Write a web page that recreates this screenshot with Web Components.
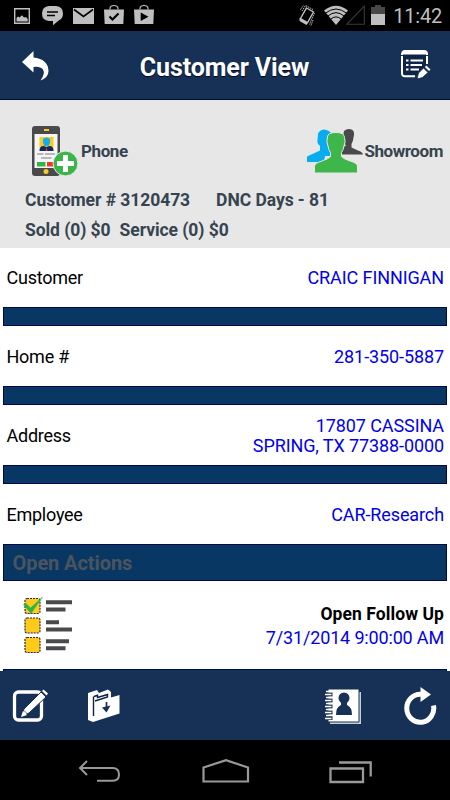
<!DOCTYPE html>
<html lang="en">
<head>
<meta charset="utf-8">
<title>Customer View</title>
<style>
html, body {
    margin: 0;
    height: 100%;
    background: #fff;
}
body {
    font-family: Roboto, "Liberation Sans", sans-serif;
    overflow: hidden;
}
</style>
</head>
<body>
<crm-screen>
    <crm-status slot="status">11:42</crm-status>
    <crm-header slot="header">Customer View</crm-header>
    <crm-summary slot="summary">
        <span slot="phone">Phone</span>
        <span slot="showroom">Showroom</span>
        <span slot="number">Customer # 3120473</span>
        <span slot="dnc">DNC Days - 81</span>
        <span slot="sold">Sold (0) $0</span>
        <span slot="service">Service (0) $0</span>
    </crm-summary>
    <crm-row label="Customer"><span>CRAIC FINNIGAN</span></crm-row>
    <crm-divider></crm-divider>
    <crm-row label="Home #"><span>281-350-5887</span></crm-row>
    <crm-divider></crm-divider>
    <crm-row label="Address"><span>17807 CASSINA</span><span>SPRING, TX 77388-0000</span></crm-row>
    <crm-divider></crm-divider>
    <crm-row label="Employee"><span>CAR-Research</span></crm-row>
    <crm-divider size="large">Open Actions</crm-divider>
    <crm-action due="7/31/2014 9:00:00 AM">Open Follow Up</crm-action>
    <crm-divider></crm-divider>
    <crm-toolbar slot="toolbar"></crm-toolbar>
    <crm-nav slot="nav"></crm-nav>
</crm-screen>

<script>
const icons = {
    picture: [16, 31, `<path d="M.7 8.7H15.3V23.3H.7Z" fill="none" stroke="#bfbfbf" stroke-width="1.4"/><path d="M2.500 21.500V18L4 16.500L5.500 17.500L8 15.300L10 17.500L12 17L13.700 19V21.500Z" fill="#bfbfbf"/>`],
    chat: [21, 31, `<path d="M7 6H14Q21 6.500 21 13.500Q21 18.500 17 20.300L11 25.300V21H7Q0 20.500 0 13.500Q0 6.500 7 6Z" fill="#bfbfbf"/><path d="M5 12H16M5 15.500H13" stroke="#000" stroke-width="1.3"/>`],
    mail: [21, 31, `<path d="M0 8H21V24H0Z" fill="#bfbfbf"/><path d="M1 9.500L10.500 16.500L20 9.500" fill="none" stroke="#000" stroke-width="1.600"/>`],
    bagcheck: [20, 31, `<path d="M0 9.500H20L19.300 24H.7Z" fill="#bfbfbf"/><path d="M6 9.500V8Q6.500 5.500 10 5.500T14 8V9.500" fill="none" stroke="#bfbfbf" stroke-width="1.2"/><path d="M5.500 16.500L8.500 19.500L14.500 13.500" fill="none" stroke="#000" stroke-width="2.200"/>`],
    bagplay: [20, 31, `<path d="M0 9.500H20L19.300 24H.7Z" fill="#bfbfbf"/><path d="M6 9.500V8Q6.500 5.500 10 5.500T14 8V9.500" fill="none" stroke="#bfbfbf" stroke-width="1.2"/><path d="M6.700 12.500L14.500 16.700L6.700 21Z" fill="#000"/>`],
    vibrate: [18, 31, `<path d="M8.500 8L15.500 12L9.500 22.500L2.500 18.500Z" fill="none" stroke="#bfbfbf" stroke-width="1.4"/><path d="M1.500 18L10 22.700L8.500 25L1.500 21Z" fill="#bfbfbf"/><path d="M4 11L7.500 5.500L15 9.500M2.500 9.500L5.500 5.300M16.500 13L12.500 22L11.500 24.500M15 20L13 25.500" fill="none" stroke="#bfbfbf" stroke-dasharray="1.5 .8"/>`],
    wifi: [24, 31, `<path d="M0 10.500Q12 1 24 10.500L12 25Z" fill="#bfbfbf"/><path d="M1 13.500Q12 4.500 23 13.500M3.500 16.300Q12 9 20.500 16.300M6.500 19.300Q12 14.500 17.500 19.300" fill="none" stroke="#000" stroke-width="1"/>`],
    signal: [19, 31, `<path d="M.8 24.300H18.300V6Z" fill="none" stroke="#3a3a3a" stroke-width="1.100"/>`],
    battery: [14, 31, `<path d="M0 7H4V5H10V7H14V14H0Z" fill="#484848"/><path d="M0 14H14V25H0Z" fill="#bfbfbf"/>`],
    back: [28, 32, `<path d="M0 12L11.500 1V7.500Q26 9 26.500 21Q26.500 27.500 18.500 30.500Q23.500 23.500 21 19.500Q18 16 11.500 17V22.500Z" fill="#fff"/>`],
    form: [32, 32, `<path d="M2 7V24Q2 27.300 5 27.300H15M27 7V15" fill="none" stroke="#fff" stroke-width="2"/><path d="M1 6Q1 1 5 1H24Q28 1 28 5V6Z" fill="#fff"/><path d="M3 5.500H26V17L16 26H5Q3 26 3 24Z" fill="#0e2548"/><path d="M6 11.500H8.500M10.500 11.500H23M6 16H8.500M10.500 16H22M6 20.500H8.500M10.500 20.500H19" stroke="#fff" stroke-width="1.800"/><path d="M17 30L18.500 24L23.500 19L28 23.500L22.500 28.500Z" fill="#fff" stroke="#0e2548" stroke-width=".8"/><path d="M24.800 18L26.300 16.500L30.500 20.500L29 22Z" fill="#fff"/>`],
    phone: [46, 52, `<rect x="0" y="1" width="28" height="50" rx="3" fill="#4a4a4c"/><path d="M2.500 9H25.500V43H2.500Z" fill="#f5f5f5"/><path d="M12 4H17V6H12Z" fill="#ffc91d"/><circle cx="14" cy="46.500" r="2.500" fill="#ffc91d"/><path d="M7.500 12H21.500V26H7.500Z" fill="#ffc91d"/><path d="M11 14Q14.500 11 18 14V18L16.500 21H12.500L11 18Z" fill="#15aee8"/><path d="M7.500 26Q7.500 21 11.500 21L14.500 22L17.500 21Q21.500 21 21.500 26Z" fill="#102966"/><path d="M14.500 22L15.500 26H13.500Z" fill="#e83b2e"/><path d="M5 29H11.500M13 29H23M9 33H19.500" stroke="#b8b8b8" stroke-width="2"/><path d="M5 37H13.500V41.500H5Z" fill="#2fb447"/><path d="M15 37H22V41.500H15Z" fill="#e83b2e"/><circle cx="33.500" cy="38.500" r="12.400" fill="#39b54a" stroke="#e7e7e7"/><path d="M31 30H36V36H42V41H36V47H31V41H25V36H31Z" fill="#fff"/>`],
    people: [56, 46, `<path d="M37 3Q41 -.5 45.500 2Q48 4 46.500 9.500Q46 14 44.500 16V19.500L51 22.500Q55.500 24 56 26.500H34V20L39 17.500Q36 14 36 9Z" fill="#49484b"/><path d="M11 6Q12 2 17 1.500Q22 2 24 5V28H18L17 34H0V28.500L13 22.500V18Q9.500 15 10.500 12Z" fill="#08adef"/><path d="M20.500 9Q20.500 4.500 29 4.500Q37.500 4.500 37.500 9.500Q39 14 37 18Q36.500 22 34.500 24.500V28.500Q36 30.500 43 33Q50 35 50.500 38V45H7.500V38Q8 35 15 33Q22 30.500 23.500 28.500V24.500Q21.500 22 21 18Q19 14 20.500 9Z" fill="#3eb649" stroke="#e7e7e7"/>`],
    checklist: [52, 58, `<g fill="#ffcb18" stroke="#26294d" stroke-width="1.200" stroke-dasharray="2 1"><rect x="3" y="2.500" width="15" height="15" rx="2"/><rect x="3" y="22" width="15" height="15" rx="2"/><rect x="3" y="41.500" width="15" height="15" rx="2"/></g><path d="M1.500 8.500L4 7.500L8.500 12L20.500 1L9 17.500Z" fill="#2bb34a" stroke="#2bb34a" stroke-width=".5"/><path d="M24 6.200H50M24 13.500H43.500M24 26.200H37M24 33.500H50M24 45.200H47M24 52.300H43.500" stroke="#4a4a4d" stroke-width="4"/>`],
    compose: [38, 36, `<rect x="2.500" y="4" width="27" height="28" rx="4" fill="none" stroke="#fff" stroke-width="3.300"/><path d="M9 29L12 21L29 4L34 9L17 25Z" fill="#fff" stroke="#173055"/><path d="M30 3L31.500 1.500L36 5.500L34.500 7.500Z" fill="#fff"/><path d="M9 29L11 23L15 27Z" fill="#fff"/><path d="M12 22.500L16 26.500" stroke="#173055" stroke-width=".7"/>`],
    folder: [34, 36, `<path d="M0 5L9 2L11 5L20 1.500L23 4V9.500L31.500 7V25.500L5 34L0 32Z" fill="#fff"/><path d="M5.500 28V8.500M6 8.500L9.500 7.300V9.500L19.500 6.500V9L7 13" fill="none" stroke="#0d2145" stroke-width="1.400"/><path d="M18.500 14V20" stroke="#173055" stroke-width="1.700"/><path d="M14 19.500L22.500 17.500L18.500 24.500Z" fill="#173055"/>`],
    contacts: [38, 38, `<path d="M5 5H36V37H5Z" fill="#c8ced8"/><path d="M3 2H34V35H3Z" fill="#fff" stroke="#173055" stroke-width="1"/><path d="M2 7.500H7.500M2 13.500H7.500M2 19.500H7.500M2 25.500H7.500M2 31H7.500" stroke="#173055" stroke-width="3.800"/><path d="M1 4.500H7M0 7.500H6.500M1 10.500H7M0 13.500H6.500M1 16.500H7M0 19.500H6.500M1 22.500H7M0 25.500H6.500M1 28.500H7M0 31.500H6.500" stroke="#fff" stroke-width="1.400"/><circle cx="19" cy="11" r="5.500" fill="#173055"/><path d="M16 14H22V18Q27 20 27 28H11Q11 20 16 18Z" fill="#173055"/>`],
    refresh: [34, 38, `<path d="M17 7.300A13.500 14 0 1 0 29.500 18.500" fill="none" stroke="#fff" stroke-width="5"/><path d="M16.500 0L27 7.500L16.500 15Z" fill="#fff"/>`],
    navback: [44, 26, `<path d="M9 2L2 9L9 16M2 9H34.500Q41 9 41 15.500T34.500 21.700H19" fill="none" stroke="#999" stroke-width="2"/>`],
    navhome: [48, 26, `<path d="M1.500 8.500L24 1.200L46 8.500V22.500H1.500Z" fill="none" stroke="#999" stroke-width="2.200"/>`],
    navrecent: [44, 24, `<path d="M1.500 8.500H34V22H1.500ZM10 2.500H41.700V16.500" fill="none" stroke="#999" stroke-width="2.300"/>`]
};

customElements.define('crm-icon', class extends HTMLElement {
    constructor() {
        super();
        this.attachShadow({mode: 'open'});
    }
    connectedCallback() {
        const [width, height, shape] = icons[this.getAttribute('name')];
        this.shadowRoot.innerHTML = `
            <style>
            :host { display: block; flex: none; }
            svg { display: block; }
            </style>
            <svg width="${width}" height="${height}" viewBox="0 0 ${width} ${height}">${shape}</svg>
        `;
    }
});

function define(name, html) {
    const template = document.createElement('template');
    template.innerHTML = html;

    customElements.define(name, class extends HTMLElement {
        constructor() {
            super();
            let shadow = this.attachShadow({mode: 'open'});
            shadow.appendChild(template.content.cloneNode(true));
        }
        connectedCallback() {
            // fill in text given as attributes
            this.shadowRoot.querySelectorAll('[data-attr]').forEach(el => {
                el.textContent = this.getAttribute(el.dataset.attr);
            });
        }
    });
}

define('crm-screen', `
    <style>
    :host {
        display: flex;
        flex-direction: column;
        height: 800px;
        width: 450px;
    }
    .content {
        flex: 1;
        min-height: 0;
        overflow: hidden;
    }
    </style>
    <slot name="status"></slot>
    <slot name="header"></slot>
    <slot name="summary"></slot>
    <div class="content"><slot></slot></div>
    <slot name="toolbar"></slot>
    <slot name="nav"></slot>
`);

define('crm-status', `
    <style>
    :host {
        display: flex;
        justify-content: space-between;
        height: 31px;
        box-sizing: border-box;
        padding: 0 8px 0 14px;
        background: #000;
        color: #bfbfbf;
        font-size: 20px;
        letter-spacing: -.2px;
        line-height: 33px;
    }
    .left, .right { display: flex; }
    .left { gap: 10px; }
    .left :first-child { margin-right: 2px; }
    .wifi { margin: 0 -2px 0 8px; }
    .battery { margin: 0 8px 0 6px; }
    </style>
    <div class="left">
        <crm-icon name="picture"></crm-icon>
        <crm-icon name="chat"></crm-icon>
        <crm-icon name="mail"></crm-icon>
        <crm-icon name="bagcheck"></crm-icon>
        <crm-icon name="bagplay"></crm-icon>
    </div>
    <div class="right">
        <crm-icon name="vibrate"></crm-icon>
        <crm-icon name="wifi" class="wifi"></crm-icon>
        <crm-icon name="signal"></crm-icon>
        <crm-icon name="battery" class="battery"></crm-icon>
        <slot></slot>
    </div>
`);

define('crm-header', `
    <style>
    :host {
        display: grid;
        grid-template-columns: 50px 1fr 50px;
        align-items: center;
        height: 69px;
        box-sizing: border-box;
        border-bottom: 1px solid #020f32;
        background: #173055;
        color: #fff;
    }
    .back { margin: 1px 0 0 22px; }
    h1 {
        margin: 5px 1px 0 0;
        font-size: 25px;
        letter-spacing: -.1px;
        line-height: 30px;
        text-align: center;
        text-shadow: 0 1px 1px #000626;
    }
    </style>
    <crm-icon name="back" class="back"></crm-icon>
    <h1><slot></slot></h1>
    <crm-icon name="form"></crm-icon>
`);

define('crm-summary', `
    <style>
    :host {
        display: flex;
        flex-direction: column;
        height: 147.5px;
        box-sizing: border-box;
        padding: 25px 7px 0 25px;
        background: #e7e7e7;
        color: #36444f;
        font-size: 17.5px;
        font-weight: 700;
        letter-spacing: -.06px;
        line-height: 30px;
        white-space: nowrap;
    }
    .contacts {
        display: flex;
        justify-content: space-between;
        height: 60px;
        font-size: 17px;
        letter-spacing: -.42px;
        line-height: 52px;
    }
    .contact { display: flex; gap: 3px; }
    .phone { margin-left: 7px; }
    .people { margin: 3px -2px 0 0; }
    .line { display: flex; }
    .top { gap: 26px; }
    .bottom { gap: 9px; }
    </style>
    <div class="contacts">
        <div class="contact phone"><crm-icon name="phone"></crm-icon><slot name="phone"></slot></div>
        <div class="contact"><crm-icon name="people" class="people"></crm-icon><slot name="showroom"></slot></div>
    </div>
    <div class="line top"><slot name="number"></slot><slot name="dnc"></slot></div>
    <div class="line bottom"><slot name="sold"></slot><slot name="service"></slot></div>
`);

define('crm-row', `
    <style>
    :host {
        display: flex;
        align-items: center;
        justify-content: space-between;
        height: 59.8px;
        box-sizing: border-box;
        padding: 2.3px 6px 0 6.5px;
        font-size: 18px;
        letter-spacing: -.1px;
        line-height: 20.5px;
    }
    .label { letter-spacing: -.25px; }
    .value {
        display: flex;
        flex-direction: column;
        align-items: flex-end;
        color: #0000f0;
    }
    </style>
    <span class="label" data-attr="label"></span>
    <div class="value"><slot></slot></div>
`);

define('crm-divider', `
    <style>
    :host {
        display: block;
        height: 19px;
        box-sizing: border-box;
        margin: 0 3px;
        border: 1px solid #02064a;
        background: #083763;
        color: #4b545e;
    }
    :host([size="large"]) {
        height: 37.5px;
        padding-left: 8.5px;
        font-size: 20px;
        font-weight: 700;
        letter-spacing: -.08px;
        line-height: 37px;
    }
    </style>
    <slot></slot>
`);

define('crm-action', `
    <style>
    :host {
        display: flex;
        justify-content: space-between;
        height: 87.5px;
        box-sizing: border-box;
        padding: 15px 6px 0 22px;
        font-size: 18px;
        line-height: 24px;
        text-align: right;
    }
    .text { margin-top: 6px; }
    .title {
        font-weight: 700;
        font-size: 17.5px;
        letter-spacing: .07px;
    }
    .due {
        color: #0000f0;
        letter-spacing: -.16px;
    }
    </style>
    <crm-icon name="checklist"></crm-icon>
    <div class="text">
        <div class="title"><slot></slot></div>
        <div class="due" data-attr="due"></div>
    </div>
`);

define('crm-toolbar', `
    <style>
    :host {
        display: flex;
        justify-content: space-between;
        height: 69px;
        box-sizing: border-box;
        padding: 17px 12px 0;
        background: #173055;
    }
    .group { display: flex; }
    .left { gap: 38px; }
    .right { gap: 41px; }
    .contacts { margin-top: -1px; }
    .refresh { margin-top: -1px; }
    </style>
    <div class="group left"><crm-icon name="compose"></crm-icon><crm-icon name="folder"></crm-icon></div>
    <div class="group right"><crm-icon name="contacts" class="contacts"></crm-icon><crm-icon name="refresh" class="refresh"></crm-icon></div>
`);

define('crm-nav', `
    <style>
    :host {
        display: flex;
        justify-content: space-between;
        height: 60px;
        box-sizing: border-box;
        padding: 19px 77px 0 78px;
        background: #000;
    }
    .recent { margin-top: 1px; }
    </style>
    <crm-icon name="navback"></crm-icon>
    <crm-icon name="navhome"></crm-icon>
    <crm-icon name="navrecent" class="recent"></crm-icon>
`);
</script>
</body>
</html>
